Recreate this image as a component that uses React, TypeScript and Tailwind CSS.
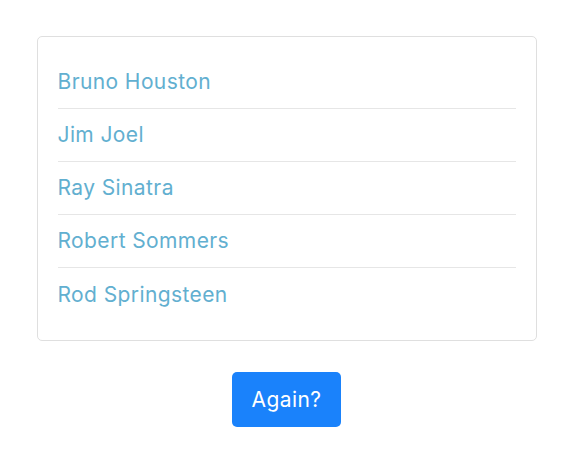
const names = ["Bruno Houston", "Jim Joel", "Ray Sinatra", "Robert Sommers", "Rod Springsteen"];

export default function App() {
  return (
    <div className="min-h-screen bg-white pt-[36px] pr-[6px] font-['Inter','Liberation_Sans',sans-serif]">
      <div className="mx-auto w-[500px] rounded-[5px] border border-[#dfdfdf] px-5 py-[19px]">
        <ul>
          {names.map((name, i) => (
            <li
              key={name}
              className={
                "flex h-[53px] items-center text-[21px] tracking-[0.4px] text-[#62afd0] " +
                (i < names.length - 1 ? "border-b border-[#e6e6e6]" : "")
              }
            >
              {name}
            </li>
          ))}
        </ul>
      </div>
      <div className="mt-[31px] flex justify-center">
        <button className="h-[55px] w-[109px] rounded-[5px] bg-[#1a82fb] text-[21px] tracking-[0.4px] text-white">
          Again?
        </button>
      </div>
    </div>
  );
}
